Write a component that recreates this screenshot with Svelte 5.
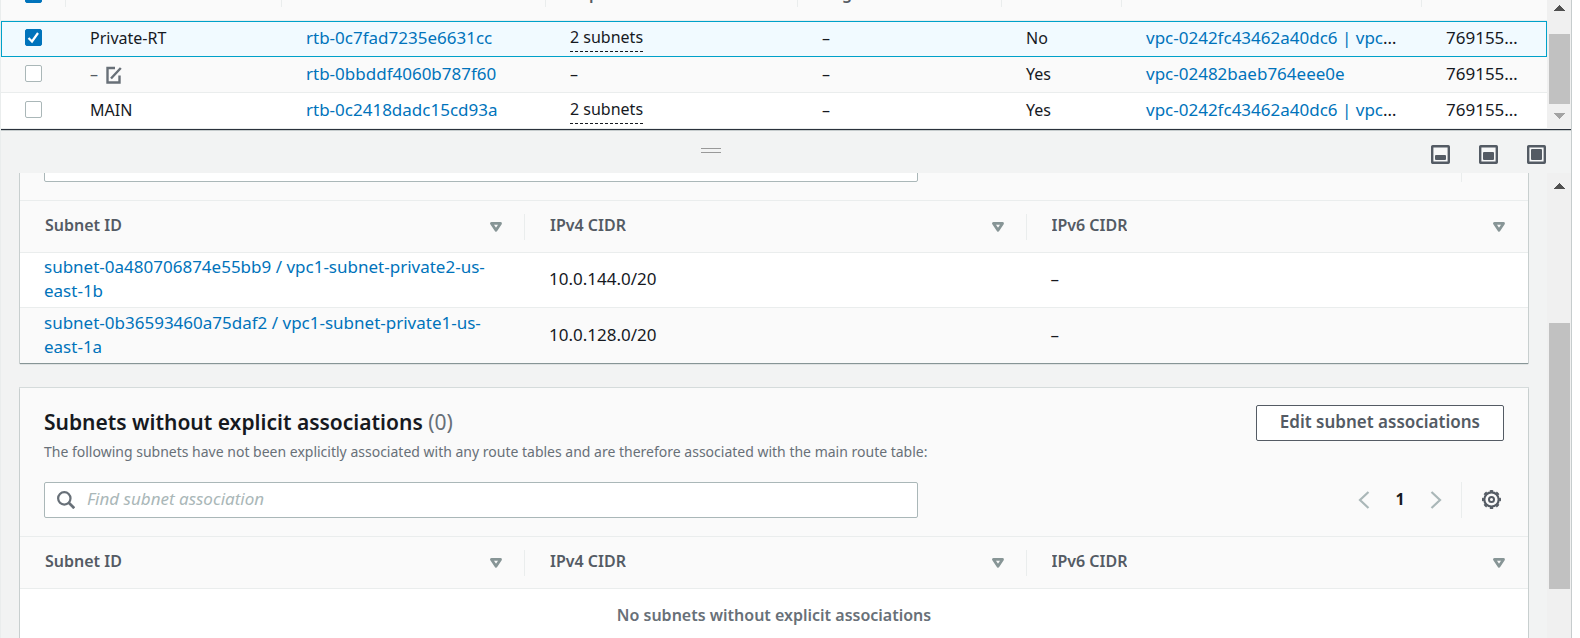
<script>
  let routeTables = $state([
    { name: 'Private-RT', id: 'rtb-0c7fad7235e6631cc', subnets: '2 subnets', main: 'No', vpc: 'vpc-0242fc43462a40dc6 | vpc1-vpc', owner: '769155000000', selected: true },
    { name: '', id: 'rtb-0bbddf4060b787f60', subnets: '', main: 'Yes', vpc: 'vpc-02482baeb764eee0e', owner: '769155000000', selected: false },
    { name: 'MAIN', id: 'rtb-0c2418dadc15cd93a', subnets: '2 subnets', main: 'Yes', vpc: 'vpc-0242fc43462a40dc6 | vpc1-vpc', owner: '769155000000', selected: false }
  ]);
  const routeHeads = ['Name', 'Route table ID', 'Explicit subnet associat…', 'Edge associations', 'Main', 'VPC', 'Owner ID'];
  const subnetHeads = ['Subnet ID', 'IPv4 CIDR', 'IPv6 CIDR'];
  const subnets = [
    { id: 'subnet-0a480706874e55bb9 / vpc1-subnet-private2-us-east-1b', v4: '10.0.144.0/20' },
    { id: 'subnet-0b36593460a75daf2 / vpc1-subnet-private1-us-east-1a', v4: '10.0.128.0/20' }
  ];
  const sizes = [
    { label: 'Small panel', top: 10 },
    { label: 'Medium panel', top: 7 },
    { label: 'Full panel', top: 4 }
  ];
</script>

{#snippet arrow(up)}
  <svg class="arrow" viewBox="0 0 11 6" aria-hidden="true">
    <path d={up ? 'M5 0h1v1h1v1h1v1h1v1h1v1h1v1H0V5h1V4h1V3h1V2h1V1h1z' : 'M0 0h11v1h-1v1H9v1H8v1H7v1H6v1H5V5H4V4H3V3H2V2H1V1H0z'} fill={up ? '#505050' : '#a3a3a3'} />
  </svg>
{/snippet}

{#snippet toolbar()}
  <div class="toolbar">
    <label class="search">
      <svg viewBox="0 0 16 16" width="18" height="18" fill="none" stroke="#687078" stroke-width="2" aria-hidden="true">
        <circle cx="6.5" cy="6.5" r="5.5" /><path d="M10.5 10.5l4.8 4.8" stroke-width="2.4" />
      </svg>
      <input type="text" placeholder="Find subnet association" aria-label="Find subnet association" />
    </label>
    <div class="pager">
      <button class="icon" aria-label="Previous page">
        <svg viewBox="0 0 12 18" width="12" height="18" fill="none" stroke="#aab7b8" stroke-width="2.2"><path d="M10.5 1L2 9l8.5 8" /></svg>
      </button>
      <button class="page">1</button>
      <button class="icon" aria-label="Next page">
        <svg viewBox="0 0 12 18" width="12" height="18" fill="none" stroke="#aab7b8" stroke-width="2.2"><path d="M1.5 1L10 9l-8.5 8" /></svg>
      </button>
      <span class="rule"></span>
      <button class="icon gear" aria-label="Preferences">
        <svg viewBox="0 0 19 19" width="19" height="19" fill="none" stroke="#545b64">
          <circle cx="9.5" cy="9.5" r="7.2" stroke-width="2.2" />
          <circle cx="9.5" cy="9.5" r="8.6" stroke-width="1.8" pathLength="80" stroke-dasharray="5 5" stroke-dashoffset="2.5" />
          <circle cx="9.5" cy="9.5" r="2.5" stroke-width="2" />
        </svg>
      </button>
    </div>
  </div>
{/snippet}

{#snippet subnetHead()}
  <colgroup><col class="wide" /><col /><col /></colgroup>
  <thead>
    <tr>
      {#each subnetHeads as head}
        <th scope="col">
          <div class="head">
            <span>{head}</span>
            <svg viewBox="0 0 12 10" width="12" height="10" aria-hidden="true"><path d="M1.5 1.4h9L6 8.3z" fill="none" stroke="#879596" stroke-width="2.8" stroke-linejoin="round" /></svg>
          </div>
        </th>
      {/each}
    </tr>
  </thead>
{/snippet}

<div class="app">
  <section class="pane list">
    <div class="view end">
      <table class="routes">
        <colgroup>
          <col style="width:65px" /><col style="width:216px" /><col style="width:264px" /><col style="width:252px" /><col style="width:204px" /><col style="width:120px" /><col style="width:300px" /><col style="width:125px" />
        </colgroup>
        <thead>
          <tr>
            <th><div class="head pick"><input type="checkbox" checked aria-label="Select all" /></div></th>
            {#each routeHeads as head}
              <th scope="col"><div class="head"><span>{head}</span></div></th>
            {/each}
          </tr>
        </thead>
        <tbody>
          {#each routeTables as r}
            <tr class:selected={r.selected}>
              <td class="pick"><input type="checkbox" bind:checked={r.selected} aria-label="Select {r.id}" /></td>
              <td>
                {#if r.name}
                  {r.name}
                {:else}
                  <span class="none">–</span><button class="icon edit" aria-label="Edit name"><svg viewBox="0 0 16 18" width="16" height="18" fill="none" stroke="#687078" stroke-width="2.4"><path d="M9 2H1.5v14.5h12V9.5M5 12.5L14.8 2" /></svg></button>
                {/if}
              </td>
              <td class="code"><a href="#{r.id}">{r.id}</a></td>
              <td>{#if r.subnets}<button class="popover">{r.subnets}</button>{:else}–{/if}</td>
              <td>–</td>
              <td>{r.main}</td>
              <td class="code"><a href="#{r.vpc}">{r.vpc}</a></td>
              <td class="code">{r.owner}</td>
            </tr>
          {/each}
        </tbody>
      </table>
    </div>
    <div class="scrollbar">
      {@render arrow(true)}
      <div class="track"><div class="thumb" style="top:19%;height:78%"></div></div>
      {@render arrow(false)}
    </div>
  </section>

  <header class="split">
    <span></span>
    <button class="grip" aria-label="Resize panel"></button>
    <span></span>
    <div class="sizes">
      {#each sizes as s}
        <button class="icon" aria-label={s.label}>
          <svg viewBox="0 0 19 19" width="19" height="19"><rect x="1.2" y="1.2" width="16.6" height="16.6" rx=".5" fill="#f7f8f8" stroke="#545b64" stroke-width="2.4" /><rect x="4" y={s.top} width="11" height={15 - s.top} rx="1" fill="#545b64" /></svg>
        </button>
      {/each}
    </div>
  </header>

  <section class="pane detail">
    <div class="view">
      <div class="scrolled">
        <article class="card">
          {@render toolbar()}
          <table class="subnets">
            {@render subnetHead()}
            <tbody>
              {#each subnets as s}
                <tr><td class="code"><a href="#{s.v4}">{s.id}</a></td><td class="code">{s.v4}</td><td class="code">–</td></tr>
              {/each}
            </tbody>
          </table>
        </article>
        <article class="card">
          <div class="title">
            <div>
              <h2>Subnets without explicit associations <span>(0)</span></h2>
              <p>The following subnets have not been explicitly associated with any route tables and are therefore associated with the main route table:</p>
            </div>
            <button class="action">Edit subnet associations</button>
          </div>
          {@render toolbar()}
          <table class="subnets">
            {@render subnetHead()}
            <tbody><tr><td class="empty" colspan="3">No subnets without explicit associations</td></tr></tbody>
          </table>
        </article>
      </div>
    </div>
    <div class="scrollbar">
      {@render arrow(true)}
      <div class="track"><div class="thumb" style="top:29%;height:60%"></div></div>
    </div>
  </section>
</div>

<style>
  :global(body) { margin: 0; background: #fff; }
  .app {
    box-sizing: border-box;
    height: 100vh;
    margin-right: 8px;
    border-left: 1px solid #eaeded;
    border-right: 1px solid #c6cccd;
    display: flex;
    flex-direction: column;
    overflow: hidden;
    background: #f2f3f3;
    color: #16191f;
    font: 16px/24px 'Noto Sans', sans-serif;
  }
  button, input { font: inherit; color: inherit; margin: 0; }
  button { padding: 0; border: 0; background: none; cursor: pointer; }
  a { color: #0073bb; text-decoration: none; }
  svg { display: block; }
  .icon { display: inline-flex; align-items: center; }
  .code { font-size: 17px; }

  .pane { display: flex; min-height: 0; }
  .list { flex: 0 0 129px; background: #fafafa; }
  .detail { flex: 1; }
  .view { flex: 1; min-width: 0; overflow: hidden; }
  .end { display: flex; flex-direction: column; justify-content: flex-end; }

  .scrollbar {
    flex: 0 0 24px;
    box-sizing: border-box;
    padding: 5px 1px 10px 2px;
    display: flex;
    flex-direction: column;
    align-items: center;
    gap: 6px;
    background: #f0f0f0;
  }
  .arrow { width: 11px; height: 6px; flex: none; }
  .track { flex: 1; width: 21px; position: relative; }
  .thumb { position: absolute; left: 0; right: 0; background: #c1c1c1; }
  .detail .scrollbar { padding: 10px 1px 0 2px; }

  table { width: 100%; table-layout: fixed; border-collapse: separate; border-spacing: 0; }
  th, td { box-sizing: border-box; padding: 0 24px 2px; text-align: left; font-weight: 400; }
  th { background: #fafafa; border-bottom: 1px solid #eaeded; color: #545b64; padding: 0; }
  .head {
    display: flex;
    align-items: center;
    justify-content: space-between;
    padding: 0 22px 0 25px;
    height: 26px;
    border-right: 1px solid #eaeded;
    font-weight: 600;
  }
  th:last-child .head { border-right-color: transparent; }
  .head span { padding-bottom: 3px; white-space: nowrap; overflow: hidden; text-overflow: ellipsis; }

  .routes th { height: 53px; }
  .routes td {
    height: 36px;
    background: #fff;
    border-bottom: 1px solid #eaeded;
    white-space: nowrap;
    overflow: hidden;
    text-overflow: ellipsis;
  }
  .routes tr:nth-child(2) td { background: #fafafa; }
  .routes .selected td { background: #f1faff; border-bottom-color: #00a1c9; }
  .routes .selected { outline: 1px solid #00a1c9; outline-offset: -1px; }
  .routes .pick { padding-left: 24px; padding-right: 0; text-overflow: clip; }
  .pick input {
    appearance: none;
    display: block;
    box-sizing: border-box;
    width: 17px;
    height: 17px;
    border: 1px solid #aab7b8;
    border-radius: 2px;
    background: #fff;
  }
  .pick input:checked {
    border-color: #0073bb;
    background: #0073bb url("data:image/svg+xml,%3Csvg xmlns='http://www.w3.org/2000/svg' viewBox='0 0 15 15' fill='none' stroke='white' stroke-width='2.2'%3E%3Cpath d='M2.5 8l3.5 3.5L12 3'/%3E%3C/svg%3E") center / 15px 15px;
  }
  .none { color: #545b64; }
  .edit { margin-left: 8px; vertical-align: middle; }
  .popover { line-height: 26px; padding-bottom: 1px; border-bottom: 1px dashed #16191f; }

  .split {
    flex: none;
    height: 44px;
    box-sizing: border-box;
    border-top: 1px solid #2a313b;
    box-shadow: inset 0 1px #c6cccd;
    padding: 6px 25px 0 0;
    display: grid;
    grid-template-columns: 1fr 20px 1fr auto;
    align-items: center;
  }
  .grip { height: 5px; margin-bottom: 8px; border: solid #999; border-width: 1px 0; }
  .sizes { display: flex; justify-content: flex-end; gap: 29px; margin-left: 10px; }

  .scrolled {
    display: flex;
    flex-direction: column;
    gap: 25px;
    padding: 0 19px;
    margin-top: -27px;
  }
  .card {
    background: #fafafa;
    box-shadow: 0 1px 1px #879596, 0 0 0 1px #d5dbdb;
  }
  .title { display: flex; align-items: flex-start; justify-content: space-between; padding: 17px 24px 0; }
  h2 { margin: 0; font-size: 21px; line-height: 34px; font-weight: 600; }
  h2 span { font-weight: 400; color: #687078; }
  p { margin: 0 0 18px; font-size: 14px; line-height: 25px; color: #687078; }
  .action {
    flex: none;
    height: 36px;
    padding: 0 23px 2px;
    border: 1px solid #545b64;
    border-radius: 2px;
    background: #fff;
    color: #545b64;
    font-size: 17px;
    font-weight: 600;
  }
  .toolbar { display: flex; justify-content: space-between; padding: 0 24px 18px; border-bottom: 1px solid #eaeded; }
  .search {
    box-sizing: border-box;
    flex: 0 0 calc(60% - 2px);
    height: 36px;
    padding: 0 12px;
    display: flex;
    align-items: center;
    gap: 12px;
    background: #fff;
    border: 1px solid #aab7b8;
    border-radius: 2px;
  }
  .search input { flex: 1; min-width: 0; padding: 0 0 2px; border: 0; outline: 0; background: none; font-size: 17px; }
  .search input::placeholder { color: #aab7b8; font-style: italic; opacity: 1; }
  .pager { display: flex; align-items: center; }
  .page { width: 60px; padding-bottom: 2px; font-weight: 700; }
  .rule { width: 1px; height: 36px; margin: 0 20px 0 19px; background: #eaeded; }
  .gear { margin: 0 3px 2px 0; }

  .wide { width: 505px; }
  .subnets th { height: 52px; }
  .subnets td { height: 55px; background: #fff; border-bottom: 1px solid #eaeded; }
  .subnets tr:nth-child(2) td { background: #fafafa; border-bottom: 0; }
  .subnets .empty { text-align: center; font-weight: 600; color: #687078; }
</style>
